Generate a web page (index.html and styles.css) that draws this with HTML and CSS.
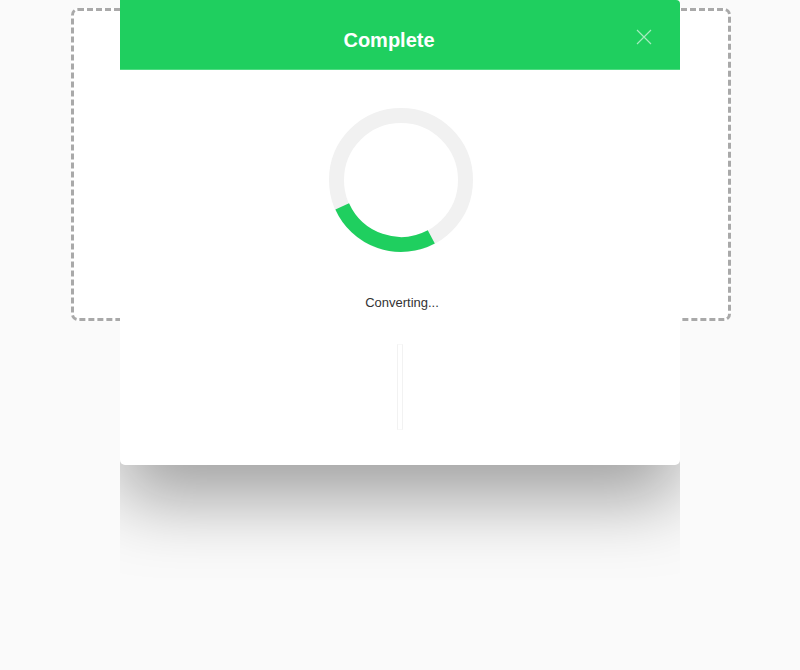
FILE: index.html
```html
<!DOCTYPE html>
<html>
<head>
<meta charset="utf-8">
<link rel="stylesheet" href="styles.css">
</head>
<body>
<div class="page">
  <div class="dropzone"></div>
</div>
<div class="overlay">
  <div class="dialog">
    <div class="dialog-header">
      <span class="dialog-title">Complete</span>
      <svg class="close" width="16" height="16" viewBox="0 0 16 16"><path d="M1 1L15 15M15 1L1 15" stroke="rgba(255,255,255,0.6)" stroke-width="1.2" fill="none"/></svg>
    </div>
    <div class="dialog-body">
      <svg class="spinner" width="144" height="144" viewBox="0 0 144 144">
        <circle cx="72" cy="72" r="64.5" fill="none" stroke="#f1f1f1" stroke-width="15"/>
        <path d="M 102.3 128.9 A 64.5 64.5 0 0 1 13.2 98.4" fill="none" stroke="#1fcf5f" stroke-width="15"/>
      </svg>
      <div class="status">Converting...</div>
      <div class="track"></div>
    </div>
  </div>
</div>
</body>
</html>
```
FILE: styles.css
```css
html, body {
  margin: 0;
  padding: 0;
  background: #fafafa;
  font-family: "Liberation Sans", Arial, sans-serif;
}
.page {
  padding: 8px 69px 0 71px;
}
.dropzone {
  width: 654px;
  height: 307px;
  border: 3px dashed #a9a9a9;
  border-radius: 7px;
  background: #ffffff;
}
.overlay {
  position: absolute;
  left: 120px;
  top: 0;
  width: 560px;
  height: 578px;
  overflow: hidden;
}
.dialog {
  width: 560px;
  height: 465px;
  background: #ffffff;
  border-radius: 0 0 5px 5px;
  box-shadow: 0 34px 72px rgba(0, 0, 0, 0.36);
}
.dialog-header {
  height: 70px;
  background: #1fcf5f;
  border-radius: 0 4px 0 0;
  border-bottom: 1px solid #4fdb82;
  box-sizing: border-box;
  display: flex;
  align-items: center;
  justify-content: center;
  position: relative;
}
.dialog-title {
  color: #ffffff;
  font-weight: bold;
  font-size: 20px;
  margin-left: -22px;
  margin-top: 11px;
}
.close {
  position: absolute;
  right: 28px;
  top: 29px;
}
.dialog-body {
  display: flex;
  flex-direction: column;
  align-items: center;
  padding-top: 37px;
}
.spinner {
  display: block;
  margin-left: 1px;
  margin-top: 1px;
}
.status {
  margin-top: 43px;
  font-size: 13px;
  color: #333333;
  line-height: 16px;
  margin-left: 4px;
}
.track {
  margin-top: 33px;
  width: 4px;
  height: 84px;
  border: 1px solid #f2f2f2;
  border-top-color: #f8f8f8;
  border-bottom-color: #f8f8f8;
}
```
